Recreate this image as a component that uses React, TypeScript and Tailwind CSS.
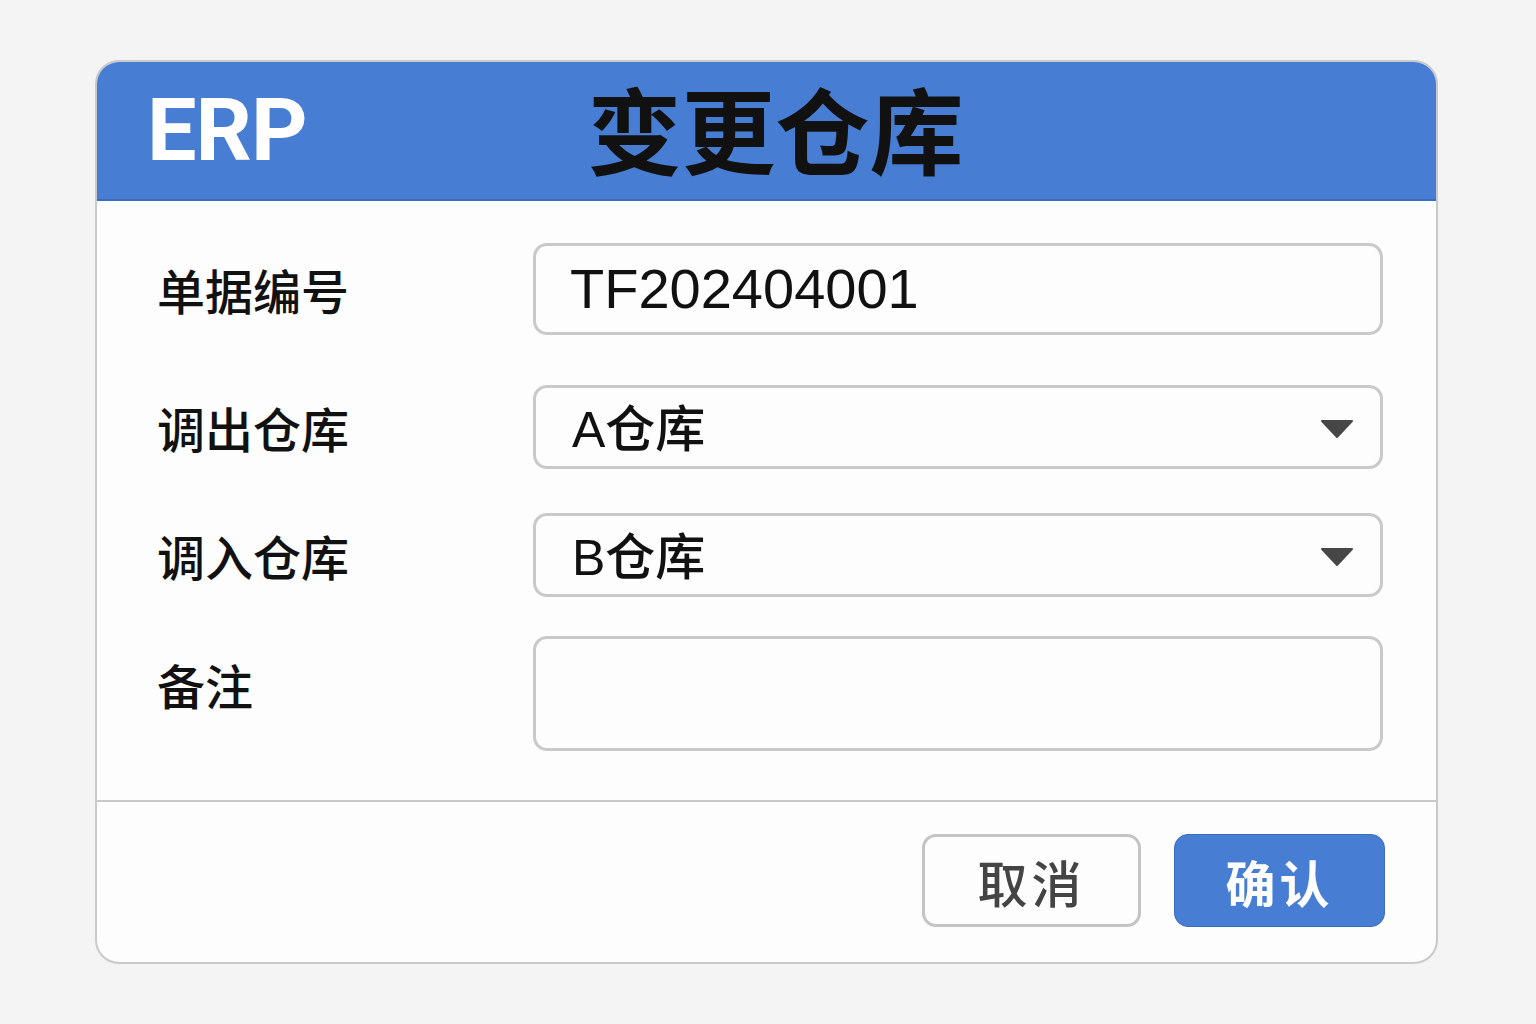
import React from "react";

const cjk = { fontFamily: '"Noto Sans CJK SC", "Noto Sans", sans-serif' };
const latin = { fontFamily: '"Liberation Sans", "Noto Sans CJK SC", sans-serif' };

function Caret() {
  return (
    <svg width="34" height="20" viewBox="0 0 34 20" className="shrink-0 mt-[4px]">
      <path d="M2 2 L32 2 L17 18 Z" fill="#474747" stroke="#474747" strokeWidth="2" strokeLinejoin="round" />
    </svg>
  );
}

export default function App() {
  return (
    <div className="w-[1536px] h-[1024px] bg-[#f4f4f4] pl-[95px] pt-[60px]" style={cjk}>
      <div className="w-[1343px] h-[904px] rounded-[24px] border-2 border-[#c9c9c9] bg-[#fdfdfd] overflow-hidden flex flex-col">
        {/* Header */}
        <div className="h-[141px] -mx-[2px] -mt-[2px] bg-[#477ed4] border-b-2 border-[#3a6cc0] flex items-center shrink-0">
          <div
            className="ml-[52px] text-white font-bold text-[88px] leading-none tracking-[-1px]"
            style={{ fontFamily: 'Roboto, "Noto Sans", sans-serif' }}
          >
            ERP
          </div>
          <div className="ml-[281px] text-[#111] font-bold text-[94px] leading-none tracking-[0px] -mt-[6px]">
            变更仓库
          </div>
        </div>

        {/* Body */}
        <div className="flex-1 pl-[60px] pr-[53px] pt-[42px]">
          <div className="flex items-center h-[92px]">
            <div className="w-[376px] text-[48px] text-[#111] font-medium leading-none">单据编号</div>
            <div className="flex-1 h-full rounded-[14px] border-[3px] border-[#c9c9c9] bg-[#fdfdfd] flex items-center pl-[34px]">
              <span className="text-[56px] text-[#111] leading-none" style={latin}>TF202404001</span>
            </div>
          </div>

          <div className="flex items-center h-[84px] mt-[50px]">
            <div className="w-[376px] text-[48px] text-[#111] font-medium leading-none">调出仓库</div>
            <div className="flex-1 h-full rounded-[14px] border-[3px] border-[#c9c9c9] bg-[#fdfdfd] flex items-center pl-[36px] pr-[26px]">
              <span className="flex-1 text-[50px] text-[#111] font-medium leading-none">
                <span style={latin}>A</span>仓库
              </span>
              <Caret />
            </div>
          </div>

          <div className="flex items-center h-[84px] mt-[44px]">
            <div className="w-[376px] text-[48px] text-[#111] font-medium leading-none">调入仓库</div>
            <div className="flex-1 h-full rounded-[14px] border-[3px] border-[#c9c9c9] bg-[#fdfdfd] flex items-center pl-[36px] pr-[26px]">
              <span className="flex-1 text-[50px] text-[#111] font-medium leading-none">
                <span style={latin}>B</span>仓库
              </span>
              <Caret />
            </div>
          </div>

          <div className="flex items-start h-[115px] mt-[39px]">
            <div className="w-[376px] text-[48px] text-[#111] font-medium leading-none pt-[24px]">备注</div>
            <div className="flex-1 h-full rounded-[14px] border-[3px] border-[#c9c9c9] bg-[#fdfdfd]" />
          </div>
        </div>

        {/* Footer */}
        <div className="h-[162px] shrink-0 border-t-2 border-[#c9c9c9] flex items-start justify-end pr-[51px] pt-[32px] gap-[33px]">
          <button className="w-[219px] h-[93px] rounded-[14px] border-[3px] border-[#c4c4c4] bg-[#fdfdfd] text-[#444] font-medium text-[50px] leading-none tracking-[4px] flex items-center justify-center">
            取消
          </button>
          <button className="w-[211px] h-[93px] rounded-[14px] bg-[#477ed4] border border-[#3a6cc0] text-white font-bold text-[50px] leading-none tracking-[4px] flex items-center justify-center">
            确认
          </button>
        </div>
      </div>
    </div>
  );
}
